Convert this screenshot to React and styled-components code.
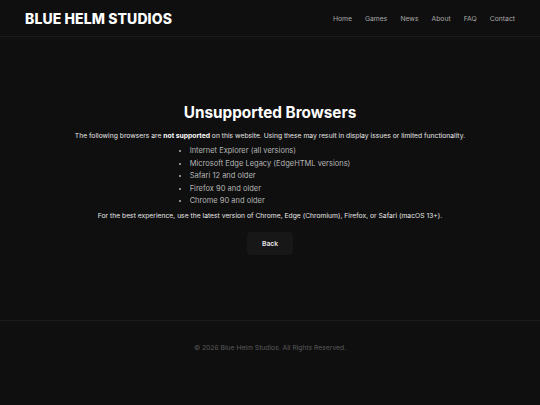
import React from "react";
import styled, { createGlobalStyle } from "styled-components";

const Global = createGlobalStyle`
  html, body { margin: 0; padding: 0; background: #0f0f0f; }
  body { font-family: Inter, "Noto Sans", sans-serif; color: #e6e6e6; }
  * { box-sizing: border-box; }
`;

const Page = styled.div`
  min-height: 405px;
  display: flex;
  flex-direction: column;
  background: #0f0f0f;
`;

const Header = styled.header`
  height: 37px;
  display: flex;
  align-items: center;
  justify-content: space-between;
  padding: 0 25px;
  border-bottom: 1px solid #1c1c1c;
`;

const Logo = styled.div`
  font-size: 14px;
  font-weight: 800;
  color: #fff;
  letter-spacing: 0.1px;
`;

const Nav = styled.nav`
  display: flex;
  gap: 13px;
`;

const NavLink = styled.a`
  font-size: 6.8px;
  color: #a8a8a8;
  text-decoration: none;
`;

const Main = styled.main`
  height: 283px;
  display: flex;
  flex-direction: column;
  align-items: center;
  padding-top: 66px;
`;

const Title = styled.h1`
  margin: 0 0 9px;
  font-size: 15.3px;
  font-weight: 700;
  color: #fff;
`;

const Text = styled.p`
  margin: 0;
  font-size: 6.75px;
  color: #e6e6e6;
  b { font-weight: 700; color: #fff; }
`;

const List = styled.ul`
  margin: 5px 0 3px;
  padding: 0;
  list-style-position: outside;
`;

const Item = styled.li`
  font-size: 7.5px;
  color: #b5b5b5;
  line-height: 12.5px;
`;

const Button = styled.button`
  margin-top: 12px;
  width: 46px;
  height: 23px;
  border: none;
  border-radius: 4px;
  background: #171717;
  color: #e6e6e6;
  font-family: Inter, sans-serif;
  font-size: 6.75px;
  font-weight: 600;
`;

const Footer = styled.footer`
  flex: 1;
  border-top: 1px solid #1c1c1c;
  display: flex;
  justify-content: center;
  padding-top: 22px;
`;

const Copy = styled.div`
  font-size: 6.75px;
  color: #5a5a5a;
`;

export default function App() {
  return (
    <Page>
      <Global />
      <Header>
        <Logo>BLUE HELM STUDIOS</Logo>
        <Nav>
          {["Home", "Games", "News", "About", "FAQ", "Contact"].map((n) => (
            <NavLink key={n} href="#">{n}</NavLink>
          ))}
        </Nav>
      </Header>
      <Main>
        <Title>Unsupported Browsers</Title>
        <Text>
          The following browsers are <b>not supported</b> on this website. Using these may result in display issues or limited functionality.
        </Text>
        <List>
          <Item>Internet Explorer (all versions)</Item>
          <Item>Microsoft Edge Legacy (EdgeHTML versions)</Item>
          <Item>Safari 12 and older</Item>
          <Item>Firefox 90 and older</Item>
          <Item>Chrome 90 and older</Item>
        </List>
        <Text>
          For the best experience, use the latest version of Chrome, Edge (Chromium), Firefox, or Safari (macOS 13+).
        </Text>
        <Button>Back</Button>
      </Main>
      <Footer>
        <Copy>© 2026 Blue Helm Studios. All Rights Reserved.</Copy>
      </Footer>
    </Page>
  );
}
